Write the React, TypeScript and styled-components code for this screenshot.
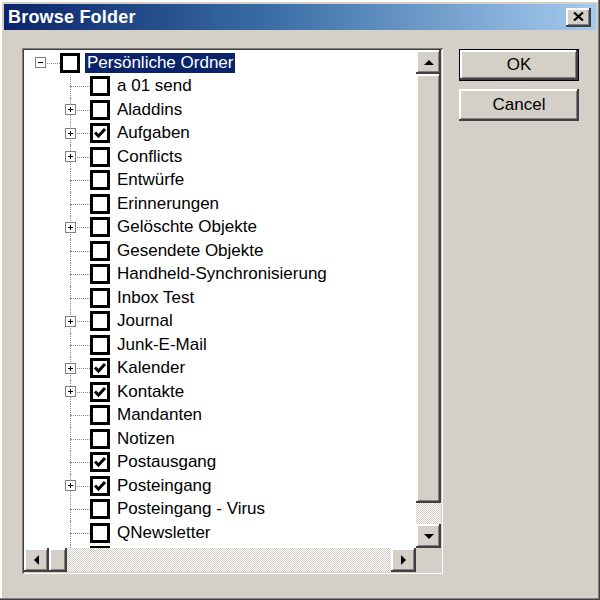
import styled, { createGlobalStyle, css } from "styled-components";

const GlobalStyle = createGlobalStyle`
  html, body {
    margin: 0;
    padding: 0;
    background: #d4d0c8;
  }
  body {
    font-family: "Liberation Sans", Arial, sans-serif;
  }
`;

const raised = css`
  background: #d4d0c8;
  box-shadow: inset -2px -2px #404040, inset 2px 2px #ffffff, inset -3px -3px #808080;
`;

const Window = styled.div`
  width: 600px;
  height: 600px;
  box-sizing: border-box;
  padding: 4px;
  background: #d4d0c8;
  box-shadow: inset -1px -1px #404040, inset -2px -2px #808080, inset 2px 2px #ffffff;
  display: flex;
  flex-direction: column;
`;

const TitleBar = styled.div`
  height: 26px;
  flex-shrink: 0;
  display: flex;
  align-items: center;
  justify-content: space-between;
  padding: 0 5px 0 4px;
  background: linear-gradient(90deg, #0a246a 0%, #3a6ea5 45%, #a6caf0 100%);
`;

const Title = styled.span`
  color: #fff;
  font-weight: bold;
  font-size: 18px;
  letter-spacing: 0.2px;
`;

const CloseButton = styled.div`
  ${raised};
  width: 25px;
  height: 19px;
  display: flex;
  align-items: center;
  justify-content: center;
  svg {
    margin: -1px 0 0 -1px;
  }
`;

const Body = styled.div`
  display: flex;
  align-items: flex-start;
  gap: 16px;
  padding: 18px 0 0 18px;
`;

const TreeFrame = styled.div`
  width: 421px;
  height: 526px;
  box-sizing: border-box;
  padding: 2px;
  background: #fff;
  box-shadow: inset 1px 1px #808080, inset -1px -1px #ffffff, inset 2px 2px #404040, inset -2px -2px #d4d0c8;
  display: grid;
  grid-template-columns: 1fr 25px;
  grid-template-rows: 1fr 24px;
`;

const TreeList = styled.div`
  overflow: hidden;
  padding: 1px 0 0 1px;
  display: flex;
  flex-direction: column;
  background: #fff;
`;

const Row = styled.div<{ $level: number }>`
  display: flex;
  align-items: center;
  height: 23.5px;
  flex-shrink: 0;
  padding-left: ${(p) => p.$level * 30}px;
`;

const ExpCell = styled.div<{ $root?: boolean }>`
  position: relative;
  width: 30px;
  height: 100%;
  flex-shrink: 0;
  display: flex;
  align-items: center;
  justify-content: center;
  &::before {
    content: "";
    display: ${(p) => (p.$root ? "none" : "block")};
    position: absolute;
    left: 15px;
    top: 0;
    bottom: 0;
    border-left: 1px dotted #8c8c8c;
  }
  &::after {
    content: "";
    position: absolute;
    left: 15px;
    right: -5px;
    top: 50%;
    border-top: 1px dotted #8c8c8c;
  }
`;

const ExpBox = styled.div`
  position: relative;
  z-index: 1;
  width: 11px;
  height: 11px;
  box-sizing: border-box;
  border: 1px solid #808080;
  background: #fff;
  display: flex;
  align-items: center;
  justify-content: center;
  margin-left: 1px;
`;

const CheckBox = styled.div`
  width: 20px;
  height: 20px;
  box-sizing: border-box;
  border: 3px solid #000;
  background: #fff;
  margin-left: 5px;
  flex-shrink: 0;
  display: flex;
  align-items: center;
  justify-content: center;
`;

const Label = styled.span<{ $selected?: boolean }>`
  margin-left: 5px;
  padding: 0 2px;
  font-size: 17px;
  line-height: 20px;
  white-space: nowrap;
  color: ${(p) => (p.$selected ? "#fff" : "#000")};
  background: ${(p) => (p.$selected ? "#0a246a" : "transparent")};
`;

const VScroll = styled.div`
  display: flex;
  flex-direction: column;
  background: #d4d0c8;
`;

const HScroll = styled.div`
  display: flex;
  background: #d4d0c8;
`;

const Corner = styled.div`
  background: #d4d0c8;
`;

const ScrollButton = styled.div`
  ${raised};
  width: 25px;
  height: 24px;
  flex-shrink: 0;
  display: flex;
  align-items: center;
  justify-content: center;
`;

const Thumb = styled.div<{ $size: number }>`
  ${raised};
  flex: 0 0 ${(p) => p.$size}px;
`;

const Track = styled.div`
  flex: 1;
  background-color: #fff;
  background-image: repeating-conic-gradient(#d4d0c8 0% 25%, #ffffff 0% 50%);
  background-size: 2px 2px;
`;

const ButtonColumn = styled.div`
  display: flex;
  flex-direction: column;
  gap: 8px;
  margin-top: 1px;
  width: 120px;
`;

const DialogButton = styled.div<{ $default?: boolean }>`
  ${raised};
  height: 32px;
  box-sizing: border-box;
  display: flex;
  align-items: center;
  justify-content: center;
  font-size: 17px;
  color: #000;
  ${(p) =>
    p.$default &&
    css`
      border: 1px solid #000;
    `}
`;

type Item = { name: string; plus?: boolean; checked?: boolean };

const items: Item[] = [
  { name: "a 01 send" },
  { name: "Aladdins", plus: true },
  { name: "Aufgaben", plus: true, checked: true },
  { name: "Conflicts", plus: true },
  { name: "Entwürfe" },
  { name: "Erinnerungen" },
  { name: "Gelöschte Objekte", plus: true },
  { name: "Gesendete Objekte" },
  { name: "Handheld-Synchronisierung" },
  { name: "Inbox Test" },
  { name: "Journal", plus: true },
  { name: "Junk-E-Mail" },
  { name: "Kalender", plus: true, checked: true },
  { name: "Kontakte", plus: true, checked: true },
  { name: "Mandanten" },
  { name: "Notizen" },
  { name: "Postausgang", checked: true },
  { name: "Posteingang", plus: true, checked: true },
  { name: "Posteingang - Virus" },
  { name: "QNewsletter" },
];

function Expander(props: { open?: boolean }) {
  return (
    <ExpBox>
      <svg width="9" height="9" viewBox="0 0 9 9">
        <rect x="2" y="4" width="5" height="1" fill="#000" />
        {!props.open && <rect x="4" y="2" width="1" height="5" fill="#000" />}
      </svg>
    </ExpBox>
  );
}

function Check(props: { checked?: boolean }) {
  return (
    <CheckBox>
      {props.checked ? (
        <svg width="14" height="14" viewBox="0 0 14 14">
          <polyline points="2,6.5 5.5,10 12,3" fill="none" stroke="#000" strokeWidth="3" />
        </svg>
      ) : null}
    </CheckBox>
  );
}

function Arrow(props: { dir: "up" | "down" | "left" | "right" }) {
  const shapes = {
    up: "0,5 5,0 10,5",
    down: "0,0 10,0 5,5",
    left: "5,0 5,10 0,5",
    right: "0,0 5,5 0,10",
  };
  const horizontal = props.dir === "left" || props.dir === "right";
  return (
    <svg width={horizontal ? 5 : 10} height={horizontal ? 10 : 5} viewBox={horizontal ? "0 0 5 10" : "0 0 10 5"}>
      <polygon points={shapes[props.dir]} fill="#000" />
    </svg>
  );
}

function App() {
  return (
    <>
      <GlobalStyle />
      <Window>
        <TitleBar>
          <Title>Browse Folder</Title>
          <CloseButton>
            <svg width="11" height="9" viewBox="0 0 11 9">
              <path d="M1 0.5 L10 8.5 M10 0.5 L1 8.5" stroke="#000" strokeWidth="2.2" />
            </svg>
          </CloseButton>
        </TitleBar>
        <Body>
          <TreeFrame>
            <TreeList>
              <Row $level={0}>
                <ExpCell $root>
                  <Expander open />
                </ExpCell>
                <Check />
                <Label $selected>Persönliche Ordner</Label>
              </Row>
              {items.map((item) => (
                <Row $level={1} key={item.name}>
                  <ExpCell>{item.plus ? <Expander /> : null}</ExpCell>
                  <Check checked={item.checked} />
                  <Label>{item.name}</Label>
                </Row>
              ))}
              <Row $level={1}>
                <ExpCell />
                <Check />
              </Row>
            </TreeList>
            <VScroll>
              <ScrollButton>
                <Arrow dir="up" />
              </ScrollButton>
              <Thumb $size={429} />
              <Track />
              <ScrollButton>
                <Arrow dir="down" />
              </ScrollButton>
            </VScroll>
            <HScroll>
              <ScrollButton>
                <Arrow dir="left" />
              </ScrollButton>
              <Thumb $size={18} />
              <Track />
              <ScrollButton>
                <Arrow dir="right" />
              </ScrollButton>
            </HScroll>
            <Corner />
          </TreeFrame>
          <ButtonColumn>
            <DialogButton $default>OK</DialogButton>
            <DialogButton>Cancel</DialogButton>
          </ButtonColumn>
        </Body>
      </Window>
    </>
  );
}

export default App;
